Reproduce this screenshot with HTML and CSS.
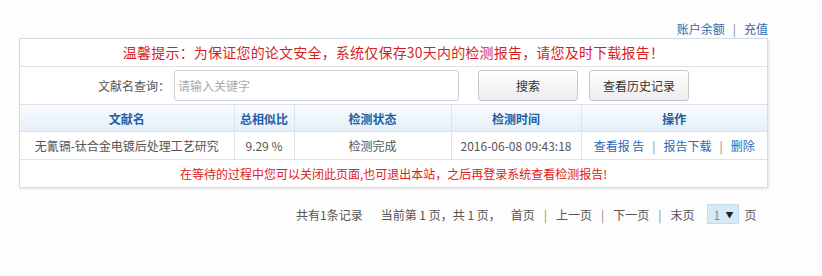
FILE: index.html
```html
<!DOCTYPE html>
<html lang="zh-CN">
<head>
<meta charset="utf-8">
<link rel="stylesheet" href="styles.css">
</head>
<body>
<div class="page">
  <div class="toplinks"><a href="#">账户余额</a><span class="sep">|</span><a href="#">充值</a></div>
  <div class="box">
    <div class="notice">温馨提示：为保证您的论文安全，系统仅保存30天内的检测报告，请您及时下载报告！</div>
    <div class="search">
      <label class="lbl">文献名查询：</label>
      <input class="kw" type="text" placeholder="请输入关键字">
      <button class="btn btn-search">搜索</button>
      <button class="btn btn-hist">查看历史记录</button>
    </div>
    <table class="grid">
      <colgroup>
        <col class="c1"><col class="c2"><col class="c3"><col class="c4"><col class="c5">
      </colgroup>
      <thead>
        <tr><th>文献名</th><th>总相似比</th><th>检测状态</th><th>检测时间</th><th>操作</th></tr>
      </thead>
      <tbody>
        <tr>
          <td>无氰镉-钛合金电镀后处理工艺研究</td>
          <td>9.29 %</td>
          <td>检测完成</td>
          <td>2016-06-08 09:43:18</td>
          <td class="ops"><a href="#">查看报 告</a><span class="sep">|</span><a href="#">报告下载</a><span class="sep">|</span><a href="#">删除</a></td>
        </tr>
        <tr>
          <td colspan="5" class="msg">在等待的过程中您可以关闭此页面,也可退出本站，之后再登录系统查看检测报告!</td>
        </tr>
      </tbody>
    </table>
  </div>
  <div class="pager">
    <span class="total">共有1条记录</span>
    <span class="cur">当前第 1 页，共 1 页，</span>
    <a href="#">首页</a><span class="sep">|</span><a href="#">上一页</a><span class="sep">|</span><a href="#">下一页</a><span class="sep">|</span><a href="#">末页</a>
    <span class="sel">1<span class="arrow">▼</span></span>
    <span>页</span>
  </div>
</div>
</body>
</html>
```

FILE: styles.css
```css
html, body {
  margin: 0;
  padding: 0;
  background: #fdfdfd;
}
body {
  font-family: "Noto Sans CJK SC", "Liberation Sans", sans-serif;
  font-size: 12px;
  color: #555;
}
a { text-decoration: none; }
.page {
  width: 749px;
  padding: 20px 0 0 19px;
}
.toplinks {
  height: 18px;
  line-height: 18px;
  text-align: right;
}
.toplinks a { color: #2f6aa8; }
.toplinks .sep { color: #888; margin: 0 8px; }

.box {
  border: 1px solid #d5dce3;
  box-shadow: 1px 1px 2px #e4e4e4;
  background: #fff;
}
.notice {
  height: 27px;
  line-height: 27px;
  text-align: center;
  color: #d61f1f;
  font-size: 14px;
  letter-spacing: 0.2px;
  border-bottom: 1px solid #dce3ea;
}
.search {
  display: flex;
  align-items: center;
  height: 37px;
  border-bottom: 1px solid #dce3ea;
}
.lbl {
  width: 150px;
  text-align: right;
  padding-right: 4px;
  color: #555;
}
.kw {
  box-sizing: border-box;
  width: 285px;
  height: 31px;
  border: 1px solid #cfcfcf;
  border-radius: 3px;
  padding: 0 3px;
  font-family: inherit;
  font-size: 12px;
  margin: 0;
}
.kw::placeholder { color: #aaa; }
.btn {
  box-sizing: border-box;
  height: 31px;
  width: 100px;
  border: 1px solid #c8c8c8;
  border-radius: 3px;
  background: linear-gradient(#ffffff, #ededed);
  font-family: inherit;
  font-size: 12px;
  color: #333;
  padding: 0;
  margin: 0;
}
.btn-search { margin-left: 19px; }
.btn-hist { margin-left: 11px; }

.grid {
  width: 100%;
  border-collapse: collapse;
  table-layout: fixed;
}
.c1 { width: 214px; }
.c2 { width: 60px; }
.c3 { width: 157px; }
.c4 { width: 130px; }
.grid th, .grid td {
  border-right: 1px solid #dce3ea;
  border-bottom: 1px solid #dce3ea;
  text-align: center;
  padding: 0;
  white-space: nowrap;
}
.grid th:last-child, .grid td:last-child { border-right: none; }
.grid tr:last-child td { border-bottom: none; }
.grid th {
  height: 26px;
  color: #1d5fa6;
  font-weight: bold;
  background: linear-gradient(#f9fbfd, #e5eff8);
}
.grid td {
  height: 27px;
  color: #555;
}
.ops a { color: #2a6ab8; }
.ops .sep { color: #888; margin: 0 8px; }
.grid td.msg { color: #e02020; }

.pager {
  margin-top: 16px;
  padding-left: 277px;
  display: flex;
  align-items: center;
  height: 20px;
  color: #555;
}
.pager .total { margin-right: 18px; }
.pager .cur { margin-right: 10px; }
.pager a { color: #555; margin: 0; }
.pager span { margin-right: 6px; }
.pager .sep { color: #888; margin: 0 9px; }
.sel {
  margin-left: 12px;
  display: inline-flex;
  align-items: center;
  justify-content: space-between;
  box-sizing: border-box;
  width: 32px;
  height: 20px;
  padding: 0 4px 0 6px;
  background: #d5e9f7;
  border: 1px solid #c3dcee;
  color: #888;
}
.sel .arrow { font-size: 8px; color: #222; margin: 0; }
```
